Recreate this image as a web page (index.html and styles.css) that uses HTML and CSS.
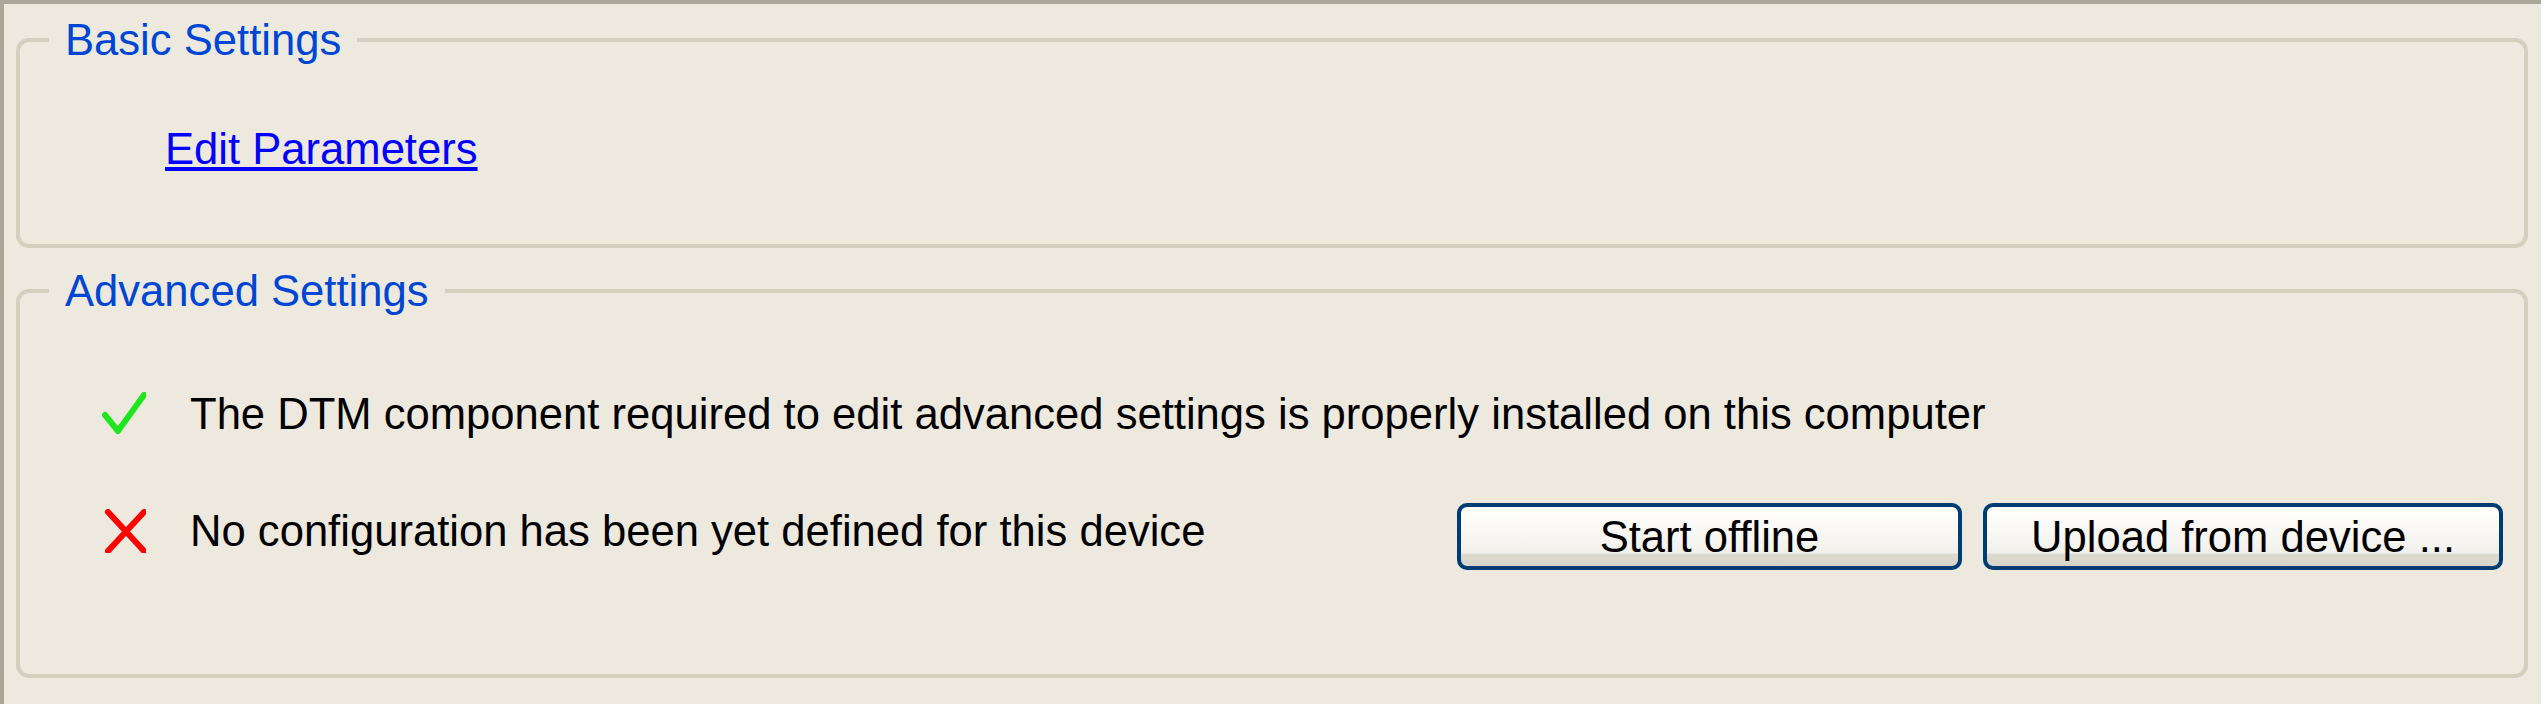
FILE: index.html
```html
<!DOCTYPE html>
<html lang="en">
<head>
    <meta charset="UTF-8">
    <title>Device Settings</title>
    <link rel="stylesheet" href="styles.css">
</head>
<body>
    <div class="panel">
        <fieldset class="group basic">
            <legend>Basic Settings</legend>
            <a href="#" class="edit-link">Edit Parameters</a>
        </fieldset>

        <fieldset class="group advanced">
            <legend>Advanced Settings</legend>

            <div class="row">
                <div class="status">
                    <svg class="icon" viewBox="0 0 44 44">
                        <path d="M3 23 L16 39 L42 3" fill="none" stroke="#1de61d" stroke-width="6" stroke-linecap="round" stroke-linejoin="round"/>
                    </svg>
                    <span>The DTM component required to edit advanced settings is properly installed on this computer</span>
                </div>
            </div>

            <div class="row">
                <div class="status">
                    <svg class="icon" viewBox="0 0 44 44">
                        <path d="M6 3 L42 42 M42 3 L6 42" fill="none" stroke="#ff0000" stroke-width="6" stroke-linecap="round"/>
                    </svg>
                    <span>No configuration has been yet defined for this device</span>
                </div>
                <div class="actions">
                    <button class="btn btn-offline">Start offline</button>
                    <button class="btn btn-upload">Upload from device ...</button>
                </div>
            </div>
        </fieldset>
    </div>
</body>
</html>
```

FILE: styles.css
```css
body {
    margin: 0;
    background: #ffffff;
    font-family: 'Liberation Sans', Arial, sans-serif;
    font-size: 43.6px;
    line-height: 50px;
}

.panel {
    width: 2541px;
    height: 704px;
    box-sizing: border-box;
    background: #ede9de;
    border-top: 4px solid #aca899;
    border-left: 4px solid #aca899;
    padding: 11px 13px 0 12px;
}

.group {
    margin: 0;
    border: 4px solid #d2d0be;
    border-radius: 13px;
    padding: 0;
    min-width: 0;
}

.group legend {
    color: #0046d5;
    margin-left: 29px;
    padding: 0 16px;
    line-height: 50px;
}

.basic {
    padding: 59px 0 70px 0;
}

.edit-link {
    display: inline-block;
    margin-left: 145px;
    color: #0000ff;
    text-decoration: underline;
}

.advanced {
    margin-top: 18px;
    padding: 73px 21px 104px 0;
}

.row {
    display: flex;
    align-items: flex-start;
}

.row + .row {
    margin-top: 64px;
}

.status {
    display: flex;
    align-items: center;
    height: 50px;
    color: #000;
}

.row + .row .status {
    margin-top: 3px;
}

.icon {
    width: 44px;
    height: 44px;
    margin-left: 82px;
    margin-right: 44px;
    flex-shrink: 0;
}

.actions {
    margin-left: auto;
    display: flex;
    gap: 21px;
}

.btn {
    height: 67px;
    box-sizing: border-box;
    border: 4px solid #003c74;
    border-radius: 10px;
    background: linear-gradient(to bottom, #ffffff 0%, #f9f8f5 40%, #f1f0eb 78%, #dedacf 80%, #d8d3c8 100%);
    font-family: 'Liberation Sans', Arial, sans-serif;
    font-size: 43.6px;
    line-height: 50px;
    color: #000;
    padding: 0;
    cursor: pointer;
}

.btn-offline {
    width: 505px;
}

.btn-upload {
    width: 520px;
}
```
